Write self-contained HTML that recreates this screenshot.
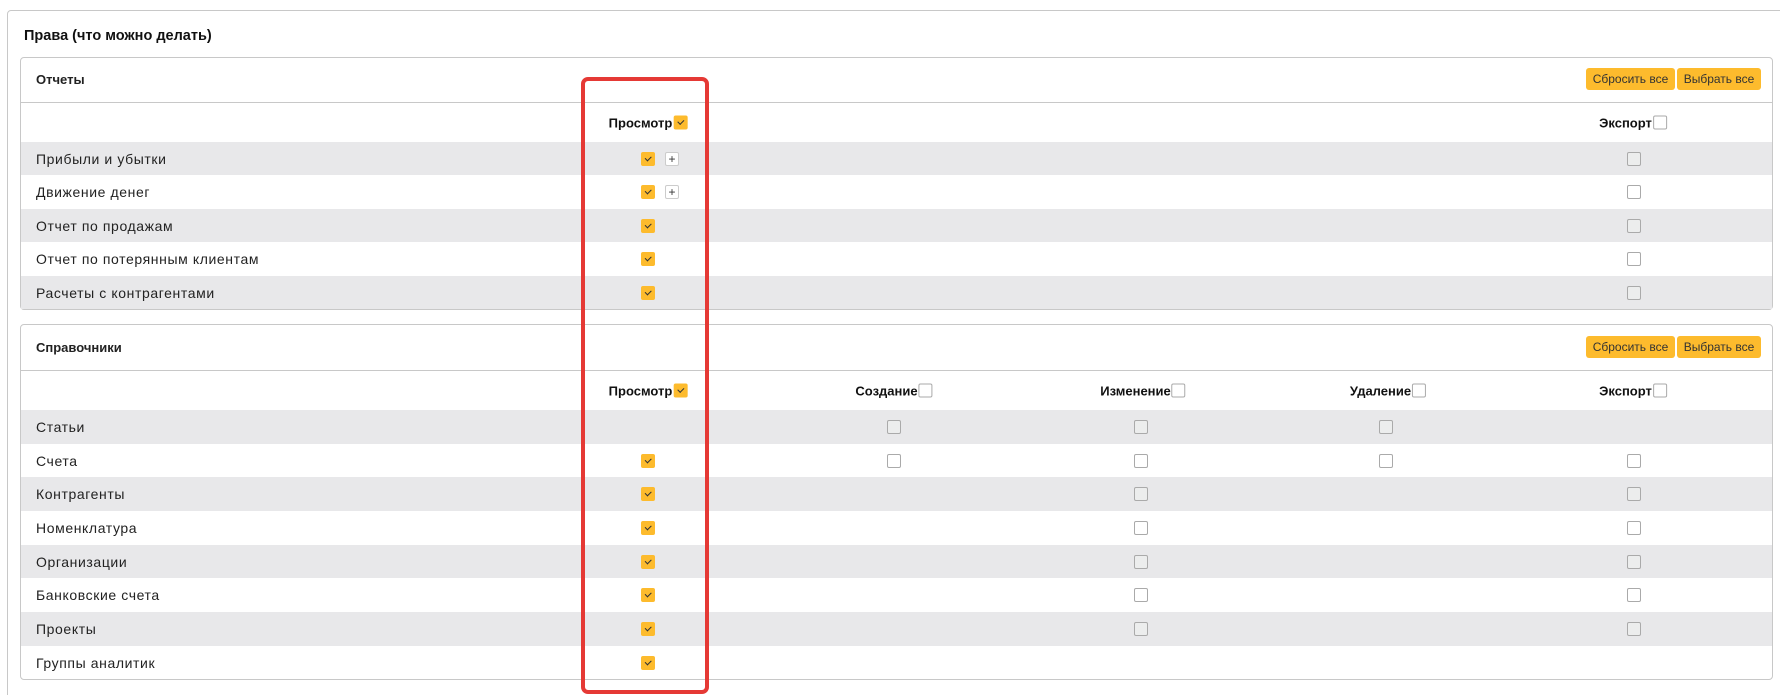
<!DOCTYPE html>
<html style="overflow:hidden;height:695px"><head><meta charset="utf-8"><style>
body{margin:0;width:1780px;height:695px;background:#fff;position:relative;overflow:hidden;font-family:"Liberation Sans",sans-serif;color:#222}
.outer{position:absolute;left:7px;top:10px;width:1800px;height:700px;border:1px solid #c8c8c8;border-radius:4px;background:#fff}
.title{position:absolute;left:24px;top:28px;font-size:14.5px;font-weight:bold;color:#111}
.card{position:absolute;left:20px;width:1751px;border:1px solid #c8c8c8;border-radius:4px;background:#fff}
.ch{position:absolute;left:0;top:0;width:100%;border-bottom:1px solid #c8c8c8;font-size:13px;font-weight:bold}
.ch span{position:absolute;left:15px}
.btn{position:absolute;top:10px;height:22px;background:#fdbb2d;border-radius:3px;font-size:12px;font-weight:normal;color:#333;line-height:22px;text-align:center}
.r{position:absolute;left:0;width:1751px;font-size:14px}
.r .l{position:absolute;left:15px;top:50%;transform:translateY(-50%);color:#222;letter-spacing:0.6px}
.g{background:#e8e8ea}
.cb{position:absolute;top:50%;margin-top:-7px;width:12px;height:12px;border:1px solid #aaa;border-radius:2px;background:#fff;box-sizing:content-box}
.g .cb{background:#eceded}
.on{background:#fdbb2d!important;border-color:#fdbb2d;width:14px;height:14px;border:0}
.on::after{content:"";position:absolute;left:4px;top:4px;width:5px;height:2.5px;border-left:1.3px solid #333;border-bottom:1.3px solid #333;transform:rotate(-45deg)}
.pl{position:absolute;top:50%;margin-top:-7px;width:12px;height:12px;border:1px solid #ccc;border-radius:2px;background:#fff;font-size:12px;line-height:12px;text-align:center;color:#333}
.h{position:absolute;top:50%;transform:translate(-50%,-50%);display:flex;align-items:center;font-weight:bold;font-size:13px;color:#111;white-space:nowrap}
.h .cb{position:relative;top:auto;margin:0 0 0 1px}
.red{position:absolute;left:581px;top:77px;width:120px;height:609px;border:4px solid #e53935;border-radius:7px}
</style></head><body>
<div class="outer"></div>
<div class="title">Права (что можно делать)</div>

<div class="card" style="top:57px;height:251px">
 <div class="ch" style="height:44px"><span style="top:14px">Отчеты</span>
  <div class="btn" style="left:1565px;width:89px">Сбросить все</div>
  <div class="btn" style="left:1656px;width:84px">Выбрать все</div>
 </div>
 <div class="r" style="top:45px;height:39px">
  <div class="h" style="left:627px">Просмотр<span class="cb on"></span></div>
  <div class="h" style="left:1612px">Экспорт<span class="cb"></span></div>
 </div>
 <div class="r g" style="top:84px;height:33px"><span class="l">Прибыли и убытки</span><span class="cb on" style="left:620px"></span><span class="pl" style="left:644px">+</span><span class="cb" style="left:1606px"></span></div>
 <div class="r" style="top:117px;height:34px"><span class="l">Движение денег</span><span class="cb on" style="left:620px"></span><span class="pl" style="left:644px">+</span><span class="cb" style="left:1606px"></span></div>
 <div class="r g" style="top:151px;height:33px"><span class="l">Отчет по продажам</span><span class="cb on" style="left:620px"></span><span class="cb" style="left:1606px"></span></div>
 <div class="r" style="top:184px;height:34px"><span class="l">Отчет по потерянным клиентам</span><span class="cb on" style="left:620px"></span><span class="cb" style="left:1606px"></span></div>
 <div class="r g" style="top:218px;height:33px"><span class="l">Расчеты с контрагентами</span><span class="cb on" style="left:620px"></span><span class="cb" style="left:1606px"></span></div>
</div>

<div class="card" style="top:324px;height:354px">
 <div class="ch" style="height:45px"><span style="top:15px">Справочники</span>
  <div class="btn" style="left:1565px;width:89px;top:11px">Сбросить все</div>
  <div class="btn" style="left:1656px;width:84px;top:11px">Выбрать все</div>
 </div>
 <div class="r" style="top:46px;height:39px">
  <div class="h" style="left:627px">Просмотр<span class="cb on"></span></div>
  <div class="h" style="left:873px">Создание<span class="cb"></span></div>
  <div class="h" style="left:1122px">Изменение<span class="cb"></span></div>
  <div class="h" style="left:1367px">Удаление<span class="cb"></span></div>
  <div class="h" style="left:1612px">Экспорт<span class="cb"></span></div>
 </div>
 <div class="r g" style="top:85px;height:34px"><span class="l">Статьи</span><span class="cb" style="left:866px"></span><span class="cb" style="left:1113px"></span><span class="cb" style="left:1358px"></span></div>
 <div class="r" style="top:119px;height:33px"><span class="l">Счета</span><span class="cb on" style="left:620px"></span><span class="cb" style="left:866px"></span><span class="cb" style="left:1113px"></span><span class="cb" style="left:1358px"></span><span class="cb" style="left:1606px"></span></div>
 <div class="r g" style="top:152px;height:34px"><span class="l">Контрагенты</span><span class="cb on" style="left:620px"></span><span class="cb" style="left:1113px"></span><span class="cb" style="left:1606px"></span></div>
 <div class="r" style="top:186px;height:34px"><span class="l">Номенклатура</span><span class="cb on" style="left:620px"></span><span class="cb" style="left:1113px"></span><span class="cb" style="left:1606px"></span></div>
 <div class="r g" style="top:220px;height:33px"><span class="l">Организации</span><span class="cb on" style="left:620px"></span><span class="cb" style="left:1113px"></span><span class="cb" style="left:1606px"></span></div>
 <div class="r" style="top:253px;height:34px"><span class="l">Банковские счета</span><span class="cb on" style="left:620px"></span><span class="cb" style="left:1113px"></span><span class="cb" style="left:1606px"></span></div>
 <div class="r g" style="top:287px;height:34px"><span class="l">Проекты</span><span class="cb on" style="left:620px"></span><span class="cb" style="left:1113px"></span><span class="cb" style="left:1606px"></span></div>
 <div class="r" style="top:321px;height:33px"><span class="l">Группы аналитик</span><span class="cb on" style="left:620px"></span></div>
</div>

<div class="red"></div>
</body></html>
